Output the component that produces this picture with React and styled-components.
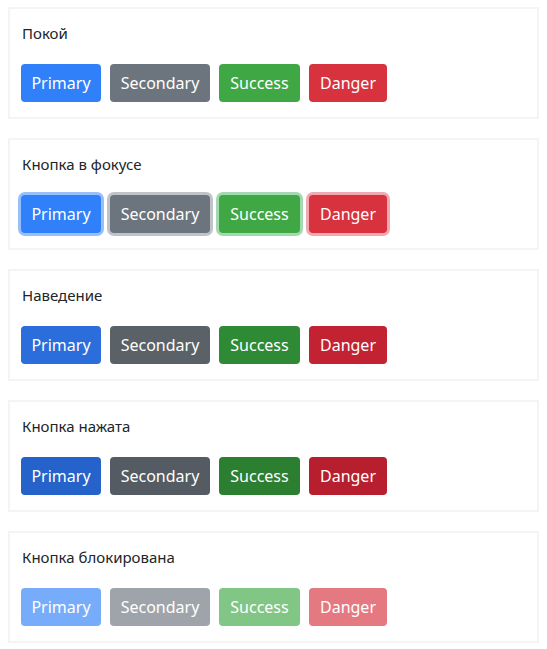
import React from 'react'
import styled, { createGlobalStyle, css } from 'styled-components'

const GlobalStyle = createGlobalStyle`
    body {
        margin: 7px 8px;
        background: #ffffff;
        font-family: "Noto Sans", "Open Sans", sans-serif;
        color: #212529;
    }
`

const palette = {
    primary: { base: '#2f80f9', hover: '#2a6ddb', active: '#2562c9', ring: 'rgba(47, 128, 249, 0.5)', width: 80 },
    secondary: { base: '#6c757d', hover: '#5a6268', active: '#545b62', ring: 'rgba(130, 138, 145, 0.5)', width: 100 },
    success: { base: '#3fa845', hover: '#2f8a35', active: '#2c7e31', ring: 'rgba(72, 180, 97, 0.5)', width: 81 },
    danger: { base: '#d8323f', hover: '#c32232', active: '#b81f2e', ring: 'rgba(225, 83, 97, 0.5)', width: 78 },
}

const Stack = styled.div`
    display: flex;
    flex-direction: column;
    gap: 19px;
`

const Card = styled.section`
    border: 2px solid #f4f4f4;
    padding: 12px 11px 15px;
`

const Title = styled.div`
    font-size: 15px;
    line-height: 24px;
    margin-bottom: 19px;
    padding-left: 1px;
`

const Row = styled.div`
    display: flex;
    gap: 9px;
`

const Button = styled.button`
    width: ${p => palette[p.$kind].width}px;
    height: 38px;
    padding: 0;
    border: 1px solid transparent;
    border-radius: 4px;
    font-family: "Noto Sans", "Open Sans", sans-serif;
    font-size: 16px;
    color: #ffffff;
    background: ${p => palette[p.$kind][p.$state] || palette[p.$kind].base};
    ${p => p.$state === 'focus' && css`
        box-shadow: 0 0 0 3px ${palette[p.$kind].ring};
    `}
    ${p => p.$state === 'disabled' && css`
        opacity: 0.65;
    `}
`

const sections = [
    { title: 'Покой', state: 'base' },
    { title: 'Кнопка в фокусе', state: 'focus' },
    { title: 'Наведение', state: 'hover' },
    { title: 'Кнопка нажата', state: 'active' },
    { title: 'Кнопка блокирована', state: 'disabled' },
]

const labels = [
    ['primary', 'Primary'],
    ['secondary', 'Secondary'],
    ['success', 'Success'],
    ['danger', 'Danger'],
]

export default function App() {
    return (
        <>
            <GlobalStyle />
            <Stack>
                {sections.map(s => (
                    <Card key={s.title}>
                        <Title>{s.title}</Title>
                        <Row>
                            {labels.map(([kind, text]) => (
                                <Button key={kind} $kind={kind} $state={s.state}>{text}</Button>
                            ))}
                        </Row>
                    </Card>
                ))}
            </Stack>
        </>
    )
}
